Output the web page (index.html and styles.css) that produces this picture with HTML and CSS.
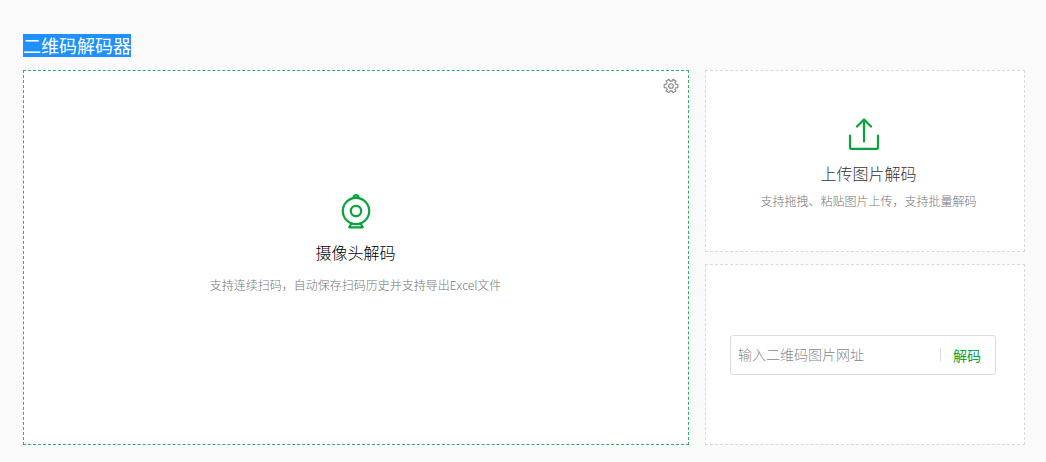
FILE: index.html
```html
<!DOCTYPE html>
<html lang="zh-CN">
<head>
  <meta charset="utf-8">
  <title>二维码解码器</title>
  <link rel="stylesheet" href="styles.css">
</head>
<body>
  <div class="decoder">
    <h1 class="title"><span class="title-text">二维码解码器</span></h1>
    <div class="panels">
      <div class="panel camera-panel">
        <svg class="setting-icon" viewBox="0 0 16 16" width="16" height="16">
          <path d="M12.700 6.300h2.100v3.400h-2.100l-.9 1.500 1.100 1.800-2.900 1.700-1.100-1.800H7.100L6 14.700 3.100 13l1.100-1.800-.9-1.500H1.200V6.300h2.100l.9-1.500L3.100 3 6 1.300l1.100 1.800h1.800L10 1.300 12.900 3l-1.100 1.800z"/>
          <circle cx="8" cy="8" r="2.3"/>
        </svg>
        <svg class="camera-icon" viewBox="0 0 32 38" width="32" height="38">
          <circle cx="16" cy="18" r="13.2"/>
          <circle cx="16" cy="18" r="5.2"/>
          <path d="M13.500 4.500a2.500 2.500 0 0 1 5 0zM11.500 30.500l-2.300 3.800h13.600l-2.300-3.800"/>
        </svg>
        <div class="camera-name">摄像头解码</div>
        <div class="tip camera-tip">支持连续扫码，自动保存扫码历史并支持导出Excel文件</div>
      </div>
      <div class="side">
        <div class="panel upload-panel">
          <svg class="upload-icon" viewBox="0 0 32 34" width="32" height="34">
            <path d="M2 17.500v11.800a1.500 1.500 0 0 0 1.500 1.500h25a1.500 1.500 0 0 0 1.500-1.500V17.500M16 23.500V2M9 8.500l7-7 7 7"/>
          </svg>
          <div class="upload-name">上传图片解码</div>
          <div class="tip upload-tip">支持拖拽、粘贴图片上传，支持批量解码</div>
        </div>
        <div class="panel url-panel">
          <form class="url-form">
            <input class="url-input" type="text" placeholder="输入二维码图片网址">
            <button class="url-button" type="button">解码</button>
          </form>
        </div>
      </div>
    </div>
  </div>
</body>
</html>
```

FILE: styles.css
```css
body {
  margin: 0;
  background-color: #fafafa;
  font-family: "Noto Sans", "Noto Sans CJK SC", sans-serif;
  font-weight: 300;
}

.decoder {
  box-sizing: border-box;
  height: 462px;
  padding: 34px 21px 17px 23px;
}

/* Page title */
.title {
  display: flex;
  height: 23px;
  margin: 0 0 13px;
  font-size: 18px;
  font-weight: 400;
  line-height: 23px;
}

.title-text {
  box-sizing: border-box;
  height: 23px;
  padding-top: 1px;
  background-color: #1e90ff;
  color: #fff;
}

/* Panels */
.panels {
  display: flex;
  gap: 16px;
  height: 375px;
}

.side {
  display: flex;
  flex-direction: column;
  gap: 12px;
  width: 320px;
}

.panel {
  box-sizing: border-box;
  display: flex;
  flex-direction: column;
  align-items: center;
  border: 1px dashed #d9d9d9;
  background-color: #fff;
}

.camera-panel {
  position: relative;
  flex: 1;
  padding: 122px 1px 0 0;
  border-color: #2fb065;
}

.upload-panel {
  height: 182px;
  padding-top: 47px;
}

.url-panel {
  height: 181px;
  padding: 70px 4px 0 0;
}

/* Icons */
.setting-icon {
  position: absolute;
  top: 7px;
  right: 9px;
  fill: none;
  stroke: #888;
  stroke-width: 1.1;
  stroke-linejoin: round;
}

.camera-icon,
.upload-icon {
  fill: none;
  stroke: #07a33b;
  stroke-width: 2.2;
  stroke-linecap: round;
  stroke-linejoin: round;
}

.camera-icon {
  margin-left: 1px;
}

.upload-icon {
  margin-right: 2px;
}

/* Panel texts */
.camera-name,
.upload-name {
  font-size: 16px;
  line-height: 24px;
}

.camera-name {
  margin-top: 10px;
  color: #000;
}

.upload-name {
  margin: 10px 0 0 7px;
  color: #333;
}

.tip {
  color: #777;
  font-size: 12px;
  line-height: 18px;
}

.camera-tip {
  margin-top: 12px;
}

.upload-tip {
  margin: 7px 0 0 7px;
}

/* Image url form */
.url-form {
  box-sizing: border-box;
  display: flex;
  align-items: center;
  width: 266px;
  height: 40px;
  border: 1px solid #ddd;
  border-radius: 3px;
}

.url-input {
  flex: 1;
  min-width: 0;
  padding: 0 7px 2px;
  border: none;
  outline: none;
  background: none;
  font: inherit;
  font-size: 14px;
}

.url-input::placeholder {
  color: #888;
}

.url-button {
  width: 55px;
  height: 14px;
  padding: 1px 2px 0 0;
  border: none;
  border-left: 1px solid #ddd;
  background: none;
  color: #07a33b;
  font: inherit;
  font-size: 14px;
  font-weight: 400;
  line-height: 14px;
}
```
